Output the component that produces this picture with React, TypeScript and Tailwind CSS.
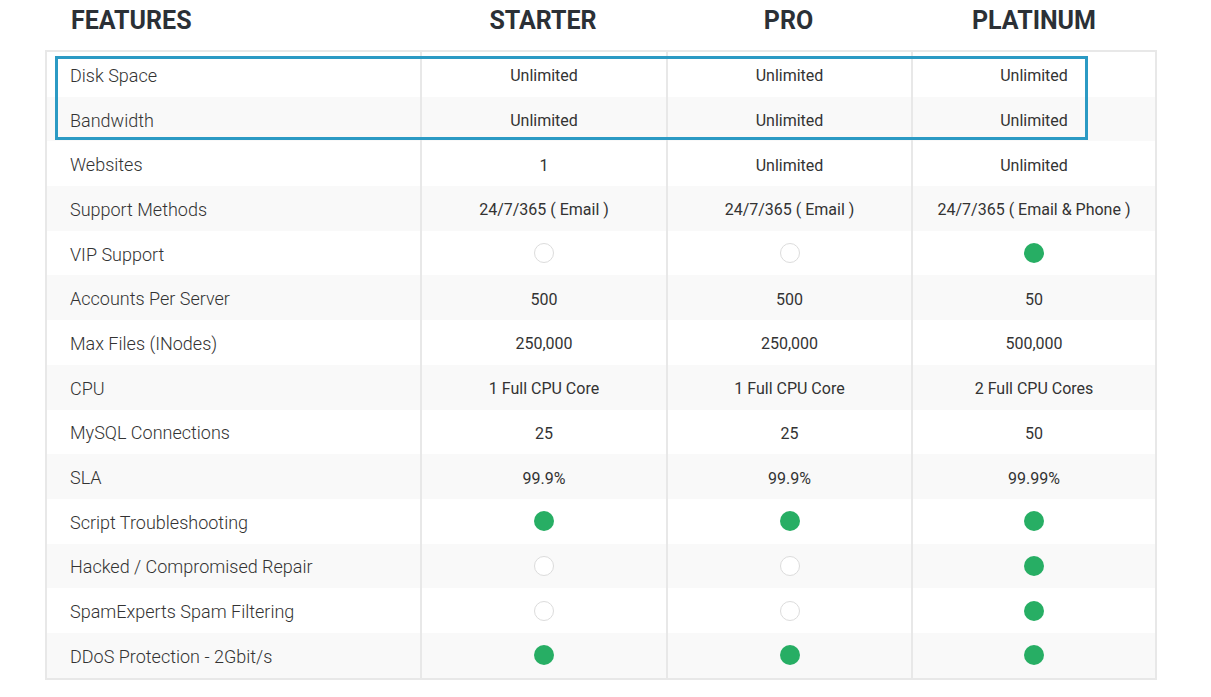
import React from "react";

type V = string | boolean;
const rows: [string, V, V, V][] = [
  ["Disk Space", "Unlimited", "Unlimited", "Unlimited"],
  ["Bandwidth", "Unlimited", "Unlimited", "Unlimited"],
  ["Websites", "1", "Unlimited", "Unlimited"],
  ["Support Methods", "24/7/365 ( Email )", "24/7/365 ( Email )", "24/7/365 ( Email & Phone )"],
  ["VIP Support", false, false, true],
  ["Accounts Per Server", "500", "500", "50"],
  ["Max Files (INodes)", "250,000", "250,000", "500,000"],
  ["CPU", "1 Full CPU Core", "1 Full CPU Core", "2 Full CPU Cores"],
  ["MySQL Connections", "25", "25", "50"],
  ["SLA", "99.9%", "99.9%", "99.99%"],
  ["Script Troubleshooting", true, true, true],
  ["Hacked / Compromised Repair", false, false, true],
  ["SpamExperts Spam Filtering", false, false, true],
  ["DDoS Protection - 2Gbit/s", true, true, true],
];

function Cell({ v }: { v: V }) {
  if (v === true) return <span className="block w-[20px] h-[20px] rounded-full bg-[#27ae64] -mt-[4px]" />;
  if (v === false) return <span className="block w-[20px] h-[20px] rounded-full border border-[#dcdcdc] bg-white -mt-[4px]" />;
  return <span>{v}</span>;
}

export default function App() {
  return (
    <div className="w-[1211px] h-[697px] bg-white overflow-hidden" style={{ fontFamily: "Roboto, 'Liberation Sans', sans-serif" }}>
      <div className="ml-[45px] w-[1112px]">
        <div className="grid grid-cols-[375px_246px_245px_246px] h-[50px] items-start pt-[5px] text-[25px] font-bold text-[#2b3036] leading-[32px]">
          <div className="pl-[26px]">FEATURES</div>
          <div className="text-center">STARTER</div>
          <div className="text-center">PRO</div>
          <div className="text-center">PLATINUM</div>
        </div>
        <div className="relative border-2 border-[#e8e8e8]">
          {rows.map((r, i) => (
            <div
              key={i}
              className={`grid grid-cols-[373px_246px_245px_244px] h-[44.7px] ${i % 2 === 1 ? "bg-[#f9f9f9]" : "bg-white"}`}
            >
              <div className="flex items-center pl-[23px] pt-[2px] text-[18px] font-light text-[#333]">{r[0]}</div>
              {[r[1], r[2], r[3]].map((v, j) => (
                <div key={j} className="flex items-center justify-center pt-[4px] border-l-2 border-[#e8e8e8] text-[16px] text-[#333]">
                  <Cell v={v} />
                </div>
              ))}
            </div>
          ))}
          <div className="absolute left-[8px] top-[4px] w-[1033px] h-[84px] border-[3px] border-[#2b9ac4]" />
        </div>
      </div>
    </div>
  );
}
